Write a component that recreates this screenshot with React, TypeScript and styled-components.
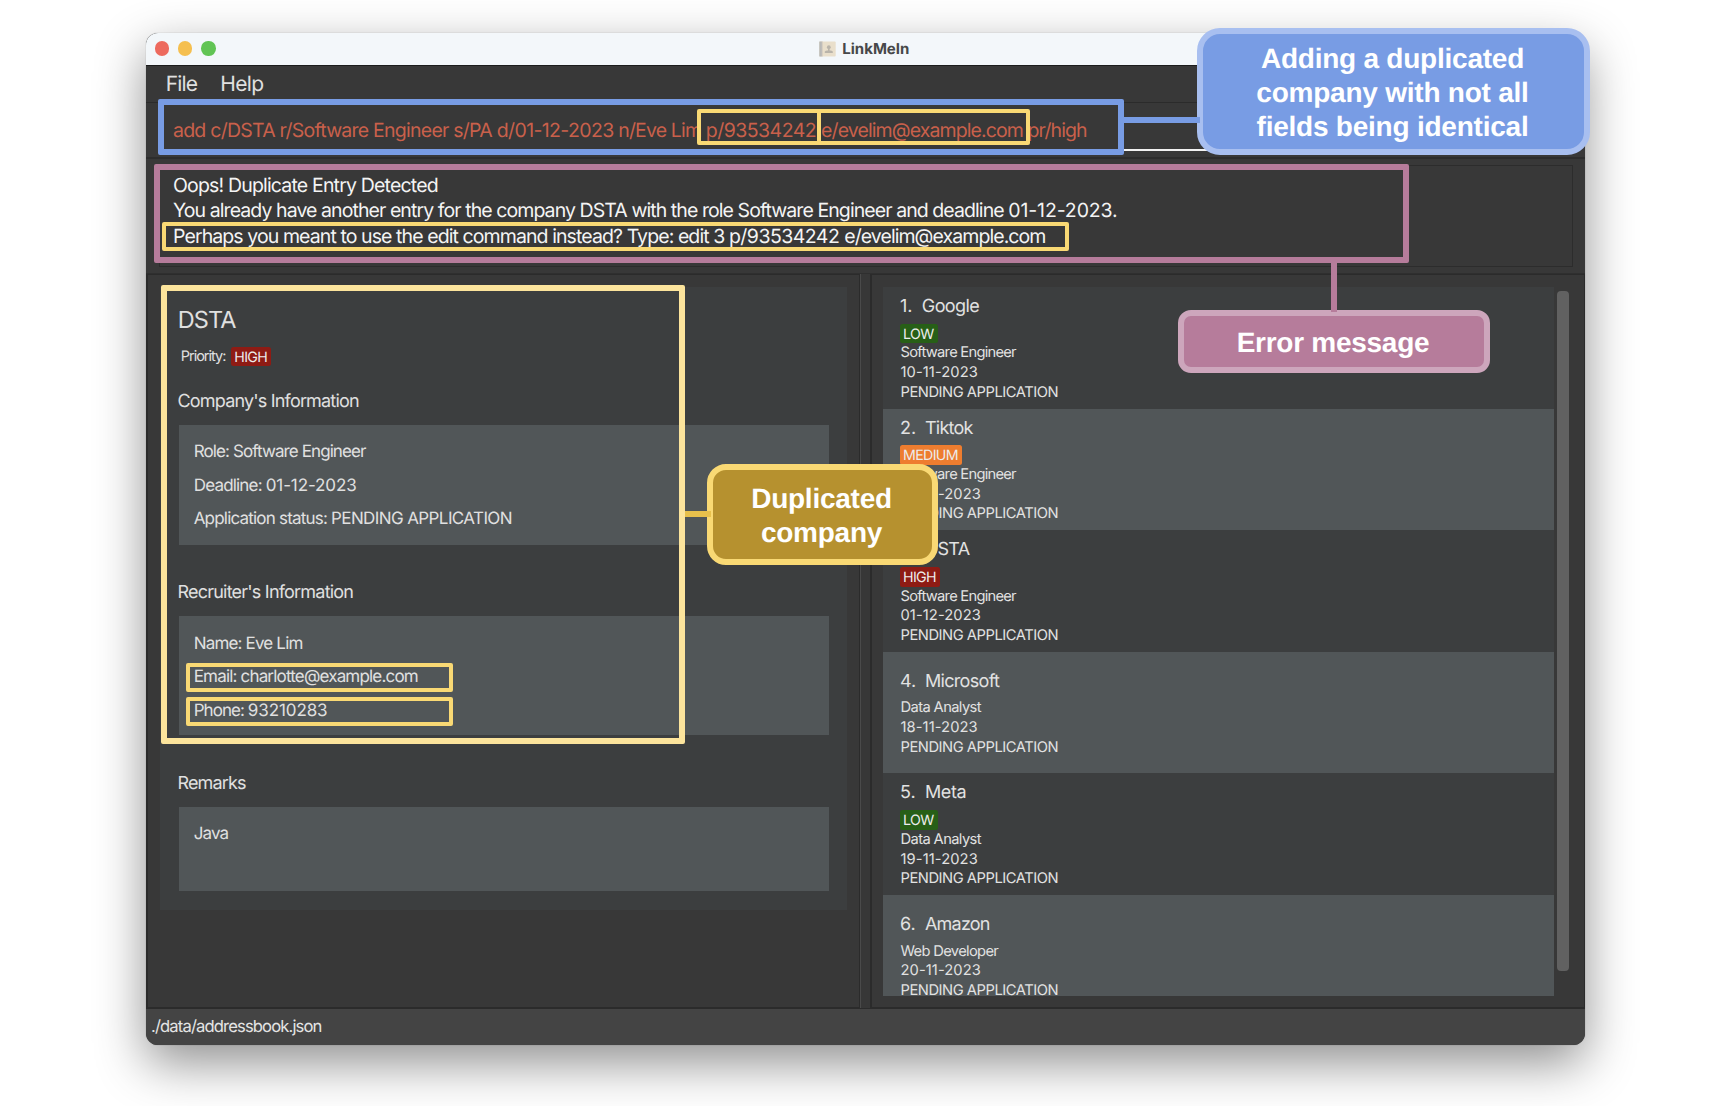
import React from "react";
import styled, { createGlobalStyle } from "styled-components";

const GlobalStyle = createGlobalStyle`
  * { box-sizing: border-box; }
  body {
    margin: 0;
    background: #ffffff;
    font-family: Inter, "Liberation Sans", sans-serif;
    text-rendering: geometricPrecision;
  }
`;

const Page = styled.main`
  position: relative;
  width: 1734px;
  height: 1106px;
  padding: 33px 0 0 146px;
  overflow: hidden;
`;

const AppWindow = styled.section`
  display: flex;
  flex-direction: column;
  width: 1439px;
  height: 1011.5px;
  overflow: hidden;
  border-radius: 12px;
  background: #383838;
  box-shadow: 0 0 1px rgba(0, 0, 0, 0.45), 0 18px 50px rgba(0, 0, 0, 0.44);
`;

const TitleBar = styled.header`
  display: grid;
  grid-template-columns: 1fr auto 1fr;
  align-items: center;
  height: 32px;
  padding-left: 8.7px;
  background: #f3f7fa;
`;

const Lights = styled.div`
  display: flex;
  gap: 9px;
  padding-bottom: 1px;
`;

const Light = styled.span<{ $color: string }>`
  width: 14.3px;
  height: 14.3px;
  border-radius: 50%;
  background: ${(p) => p.$color};
`;

const WindowTitle = styled.div`
  display: flex;
  align-items: center;
  gap: 6px;
  padding-right: 11px;
  padding-bottom: 1px;
  color: #474849;
  font-size: 15px;
  font-weight: 700;
  line-height: 20px;
`;

const MenuBar = styled.nav`
  display: flex;
  gap: 23px;
  height: 37px;
  padding-left: 19.7px;
  border-top: 1px solid #1c1c1c;
  color: #e0e0e0;
  font-size: 21px;
  line-height: 37px;
`;

const Tracked = styled.span<{ $track: number }>`
  letter-spacing: ${(p) => p.$track}px;
  white-space: pre;
`;

const CommandArea = styled.div`
  height: 55px;
  padding: 6px 12px 0 14px;
  border-top: 1px solid #2b2b2b;
`;

const CommandField = styled.div`
  height: 42px;
  padding-left: 13px;
  border-bottom: 2px solid #f2f2f2;
  color: #c9604b;
  font-size: 19.5px;
  line-height: 42px;
`;

const ResultArea = styled.div`
  height: 116px;
  padding: 6px 12px 0 13px;
  border-top: 2px solid #2d2d2d;
`;

const ResultBox = styled.div`
  display: flex;
  flex-direction: column;
  height: 102px;
  padding: 6.5px 0 0 13px;
  border: 1px solid #2c2c2c;
  color: #f4f4f4;
  font-size: 19.5px;
  line-height: 25.5px;
`;

const SplitPane = styled.div`
  display: grid;
  grid-template-columns: 714px 10px 1fr;
  flex: 1;
  min-height: 0;
  border-top: 1px solid #2f2f2f;
  border-bottom: 1px solid #2b2b2b;
`;

const Pane = styled.section`
  min-height: 0;
  padding: 12px 0 0 12px;
  border: 1px solid #2b2b2b;
  border-width: 1px 1px 1px 2px;
`;

const Divider = styled.div`
  border-left: 1px solid #4a4a4a;
  background: #373737;
`;

const DetailCard = styled.article`
  width: 687px;
  height: 623px;
  padding: 17px 18px 0 18.7px;
  background: #3c3e3f;
  color: #e0e0e0;
`;

const CompanyName = styled.h1`
  margin: 0 0 10.5px -1px;
  font-size: 23.5px;
  font-weight: 400;
  line-height: 32px;
`;

const PriorityRow = styled.div`
  display: flex;
  align-items: center;
  height: 20px;
  margin-bottom: -13.5px;
  padding-left: 2px;
  font-size: 14.5px;
  line-height: 21px;
`;

const PriorityLabel = styled.span`
  width: 50.6px;
`;

const badgeColors = { LOW: "#275f17", MEDIUM: "#ee7d2f", HIGH: "#8e1b14" };
type Priority = keyof typeof badgeColors;

const Badge = styled.span<{ $level: Priority }>`
  align-self: flex-start;
  height: 19.7px;
  padding: 0 4.3px 0 3px;
  border-radius: 2.5px;
  background: ${(p) => badgeColors[p.$level]};
  color: #ececec;
  font-size: 14.2px;
  line-height: 21px;
  letter-spacing: -0.65px;
`;

const SectionTitle = styled.h2`
  margin: 36.5px 0 11px -1.2px;
  font-size: 18px;
  font-weight: 400;
  line-height: 24px;
`;

const InfoBox = styled.div<{ $height: number }>`
  display: flex;
  flex-direction: column;
  height: ${(p) => p.$height}px;
  padding: 11.7px 0 0 15px;
  background: #515658;
  font-size: 17px;
  line-height: 33.5px;
`;

const ListPane = styled(Pane)`
  display: flex;
  gap: 3px;
  padding-left: 11px;
`;

const CompanyList = styled.ol`
  width: 671px;
  height: 709px;
  margin: 0;
  padding: 0;
  overflow: hidden;
  list-style: none;
`;

const CompanyRow = styled.li`
  display: flex;
  flex-direction: column;
  justify-content: center;
  height: 121.6px;
  padding: 2px 0 0 17px;
  background: #3c3e3f;
  color: #e2e2e2;
  font-size: 14.7px;
  line-height: 19.7px;
  &:nth-child(even) { background: #515658; }
`;

const RowTitle = styled.div`
  display: flex;
  margin-bottom: 4.7px;
  font-size: 18px;
  line-height: 24px;
`;

const RowIndex = styled.span<{ $width: number }>`
  width: ${(p) => p.$width}px;
`;

const RowDetail = styled(Tracked)`
  padding-left: 0.5px;
`;

const ScrollThumb = styled.div`
  width: 12px;
  height: 680px;
  margin-top: 4px;
  border-radius: 4px;
  background: #616161;
`;

const StatusBar = styled.footer`
  height: 36px;
  padding-left: 5px;
  background: #444444;
  color: #e4e4e4;
  font-size: 16.6px;
  line-height: 37px;
`;

/* Annotations drawn over the window */
interface BoxProps {
  $x: number;
  $y: number;
  $w: number;
  $h: number;
  $color: string;
}

const Highlight = styled.div<BoxProps & { $line: number }>`
  position: absolute;
  left: ${(p) => p.$x}px;
  top: ${(p) => p.$y}px;
  width: ${(p) => p.$w}px;
  height: ${(p) => p.$h}px;
  border: ${(p) => p.$line}px solid ${(p) => p.$color};
  border-radius: 2px;
`;

const Connector = styled.div<BoxProps>`
  position: absolute;
  left: ${(p) => p.$x}px;
  top: ${(p) => p.$y}px;
  width: ${(p) => p.$w}px;
  height: ${(p) => p.$h}px;
  background: ${(p) => p.$color};
`;

const Callout = styled.div<BoxProps & { $fill: string; $radius: number; $track: number }>`
  position: absolute;
  display: flex;
  flex-direction: column;
  align-items: center;
  justify-content: center;
  left: ${(p) => p.$x}px;
  top: ${(p) => p.$y}px;
  width: ${(p) => p.$w}px;
  height: ${(p) => p.$h}px;
  padding: 2px 2px 0 0;
  border: 6px solid ${(p) => p.$color};
  border-radius: ${(p) => p.$radius}px;
  background: ${(p) => p.$fill};
  color: #ffffff;
  font: 700 28px/34px "Liberation Sans", Arial, sans-serif;
  letter-spacing: ${(p) => p.$track}px;
`;

const BookIcon = () => (
  <svg width="17" height="16" viewBox="0 0 17 16">
    <rect x="0.3" y="0.5" width="16.4" height="15" rx="1" fill="#e9dfcb" />
    <rect x="0.3" y="0.5" width="2.6" height="15" fill="#b9b9b7" />
    <rect x="2.9" y="0.5" width="1" height="15" fill="#d6cfc1" />
    <circle cx="9.8" cy="6.2" r="1.9" fill="#b9b4aa" />
    <rect x="9" y="7.5" width="1.6" height="2.5" fill="#b9b4aa" />
    <path d="M5.8 12v-1.2c0-.9 1.6-1.2 4-1.2s4 .3 4 1.2V12z" fill="#b9b4aa" />
  </svg>
);

/* A run of text with its own letter spacing */
type Run = [text: string, track: number];

const Runs = ({ runs }: { runs: Run[] }) => (
  <span>
    {runs.map(([text, track]) => (
      <Tracked key={text} $track={track}>
        {text}
      </Tracked>
    ))}
  </span>
);

const command: Run[] = [
  ["add c/DSTA r/Software Engineer s/PA ", -0.76],
  ["d/01-12-2023", -0.63],
  [" n/Eve Lim ", -0.855],
  ["p/93534242 ", -0.53],
  ["e/evelim@example.com pr/high", -0.9],
];

const resultLines: Run[][] = [
  [["Oops! Duplicate Entry Detected", -0.826]],
  [
    ["You already have another entry for the company DSTA with the role Software Engineer and deadline ", -0.924],
    ["01-12-2023.", -0.12],
  ],
  [
    ["Perhaps you meant to use the edit command instead? Type: edit 3 ", -0.91],
    ["p/93534242 ", -0.54],
    ["e/evelim@example.com", -0.93],
  ],
];

const sections: { title: Run; height: number; lines: Run[][] }[] = [
  {
    title: ["Company's Information", -0.82],
    height: 120,
    lines: [
      [["Role: Software Engineer", -0.9]],
      [["Deadline: ", -0.81], ["01-12-2023", -0.12]],
      [["Application status: ", -0.8], ["PENDING APPLICATION", -0.6]],
    ],
  },
  {
    title: ["Recruiter's Information", -0.79],
    height: 119.3,
    lines: [
      [["Name: Eve Lim", -0.83]],
      [["Email: charlotte@example.com", -0.82]],
      [["Phone: ", -0.95], ["93210283", -0.09]],
    ],
  },
  { title: ["Remarks", -0.85], height: 84.7, lines: [[["Java", -0.9]]] },
];

interface Company {
  name: Run;
  priority?: Priority;
  role: Run;
  date: string;
}

const companies: Company[] = [
  { name: ["Google", -0.6], priority: "LOW", role: ["Software Engineer", -0.73], date: "10-11-2023" },
  { name: ["Tiktok", -0.75], priority: "MEDIUM", role: ["Software Engineer", -0.73], date: "01-12-2023" },
  { name: ["DSTA", -0.6], priority: "HIGH", role: ["Software Engineer", -0.73], date: "01-12-2023" },
  { name: ["Microsoft", -0.69], role: ["Data Analyst", -0.6], date: "18-11-2023" },
  { name: ["Meta", -0.41], priority: "LOW", role: ["Data Analyst", -0.6], date: "19-11-2023" },
  { name: ["Amazon", -0.8], role: ["Web Developer", -0.66], date: "20-11-2023" },
];

const BLUE = "#789ce4";
const PINK = "#b67c9b";
const YELLOW = "#f9d974";

export default function App() {
  return (
    <Page>
      <GlobalStyle />
      <AppWindow>
        <TitleBar>
          <Lights>
            <Light $color="#ed6a5e" />
            <Light $color="#f5bf4f" />
            <Light $color="#61c454" />
          </Lights>
          <WindowTitle>
            <BookIcon />
            <span>LinkMeIn</span>
          </WindowTitle>
        </TitleBar>
        <MenuBar>
          <Tracked $track={-0.8}>File</Tracked>
          <Tracked $track={-0.65}>Help</Tracked>
        </MenuBar>
        <CommandArea>
          <CommandField>
            <Runs runs={command} />
          </CommandField>
        </CommandArea>
        <ResultArea>
          <ResultBox>
            {resultLines.map((runs) => (
              <Runs key={runs[0][0]} runs={runs} />
            ))}
          </ResultBox>
        </ResultArea>
        <SplitPane>
          <Pane>
            <DetailCard>
              <CompanyName>
                <Tracked $track={-0.9}>DSTA</Tracked>
              </CompanyName>
              <PriorityRow>
                <PriorityLabel>
                  <Tracked $track={-1}>Priority:</Tracked>
                </PriorityLabel>
                <Badge $level="HIGH">HIGH</Badge>
              </PriorityRow>
              {sections.map((s) => (
                <React.Fragment key={s.title[0]}>
                  <SectionTitle>
                    <Tracked $track={s.title[1]}>{s.title[0]}</Tracked>
                  </SectionTitle>
                  <InfoBox $height={s.height}>
                    {s.lines.map((runs) => (
                      <Runs key={runs[0][0]} runs={runs} />
                    ))}
                  </InfoBox>
                </React.Fragment>
              ))}
            </DetailCard>
          </Pane>
          <Divider />
          <ListPane>
            <CompanyList>
              {companies.map((c, i) => (
                <CompanyRow key={c.name[0]}>
                  <RowTitle>
                    <RowIndex $width={i === 0 ? 21.8 : 25}>{i + 1}.</RowIndex>
                    <Tracked $track={c.name[1]}>{c.name[0]}</Tracked>
                  </RowTitle>
                  {c.priority && <Badge $level={c.priority}>{c.priority}</Badge>}
                  <RowDetail $track={c.role[1]}>{c.role[0]}</RowDetail>
                  <RowDetail $track={0.1}>{c.date}</RowDetail>
                  <RowDetail $track={-0.45}>PENDING APPLICATION</RowDetail>
                </CompanyRow>
              ))}
            </CompanyList>
            <ScrollThumb />
          </ListPane>
        </SplitPane>
        <StatusBar>
          <Tracked $track={-0.86}>./data/addressbook.json</Tracked>
        </StatusBar>
      </AppWindow>

      <Highlight $x={158} $y={99} $w={966} $h={56} $line={6} $color={BLUE} />
      <Highlight $x={697} $y={109} $w={124} $h={36} $line={4} $color={YELLOW} />
      <Highlight $x={817} $y={109} $w={213} $h={36} $line={4} $color={YELLOW} />
      <Highlight $x={154} $y={164} $w={1255} $h={99} $line={6} $color={PINK} />
      <Highlight $x={162} $y={222} $w={907} $h={29} $line={4} $color={YELLOW} />
      <Highlight $x={161} $y={285} $w={524} $h={459} $line={6} $color="#fce49c" />
      <Highlight $x={186} $y={663} $w={267} $h={29} $line={4} $color={YELLOW} />
      <Highlight $x={186} $y={697} $w={267} $h={29} $line={4} $color={YELLOW} />

      <Callout $x={1197} $y={28} $w={393} $h={127} $color="#a8bff0" $fill={BLUE} $radius={23} $track={-0.23}>
        <span>Adding a duplicated</span>
        <span>company with not all</span>
        <span>fields being identical</span>
      </Callout>
      <Callout $x={1178} $y={310} $w={312} $h={63} $color="#cda6bc" $fill={PINK} $radius={13} $track={-0.27}>
        <span>Error message</span>
      </Callout>
      <Callout $x={707} $y={464} $w={231} $h={101} $color={YELLOW} $fill="#b6912f" $radius={19} $track={-0.25}>
        <span>Duplicated</span>
        <span>company</span>
      </Callout>
      <Connector $x={1124} $y={117} $w={76} $h={6} $color={BLUE} />
      <Connector $x={1331} $y={263} $w={6} $h={49} $color={PINK} />
      <Connector $x={685} $y={511} $w={26} $h={6} $color="#e8c04c" />
    </Page>
  );
}
